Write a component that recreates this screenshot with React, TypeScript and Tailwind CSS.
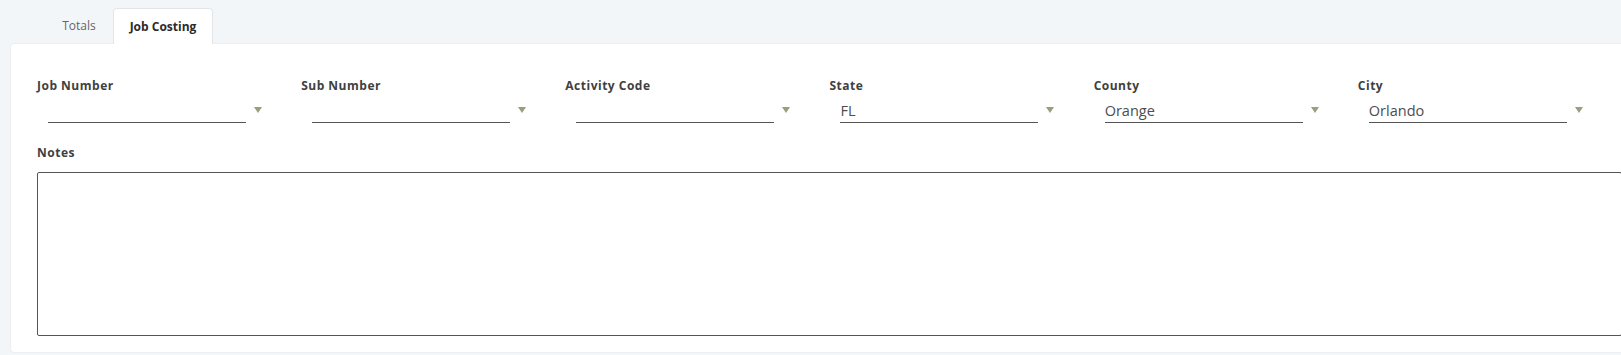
import React from 'react'

type Field = { label: string; value: string }

const fields: Field[] = [
  { label: 'Job Number', value: '' },
  { label: 'Sub Number', value: '' },
  { label: 'Activity Code', value: '' },
  { label: 'State', value: 'FL' },
  { label: 'County', value: 'Orange' },
  { label: 'City', value: 'Orlando' },
]

function SelectField({ label, value }: Field) {
  return (
    <div className="flex flex-col">
      <label className="h-[16px] text-[12px] font-bold leading-[16px] tracking-[0.5px] text-[#404040]">
        {label}
      </label>
      <div className="mt-[6px] flex items-center">
        <div className="ml-[11px] h-[23px] w-[198px] border-b border-[#555] text-[14.5px] leading-[22px] text-[#4d4d4d]">
          {value}
        </div>
        <span className="ml-[8px] mb-[3px] h-0 w-0 border-x-[4.5px] border-t-[6px] border-x-transparent border-t-[#9c9c80]" />
      </div>
    </div>
  )
}

export default function App() {
  return (
    <div className="min-h-[355px] w-[1680px] bg-[#f3f6f9] pt-[8px] font-['Open_Sans',sans-serif]">
      <div className="flex pl-[45px]">
        <div className="flex h-[35px] w-[68px] items-center justify-center text-[12px] text-[#666]">
          Totals
        </div>
        <div className="relative z-10 -mb-px flex h-[36px] w-[100px] items-center justify-center rounded-t-[4px] border border-b-0 border-[#e3e6e9] bg-white text-[12px] font-bold text-[#2b2b2b]">
          Job Costing
        </div>
      </div>
      <div className="ml-[10px] w-[1640px] rounded-[4px] border border-[#eceef0] bg-white pl-[26px] pr-[27px] pt-[34px] pb-[16px]">
        <div className="grid grid-cols-6">
          {fields.map((f) => (
            <SelectField key={f.label} {...f} />
          ))}
        </div>
        <div className="mt-[22px] h-[16px] text-[12px] font-bold leading-[16px] tracking-[0.5px] text-[#404040]">
          Notes
        </div>
        <textarea className="mt-[11px] block h-[164px] w-full resize-none rounded-[2px] border border-[#555] bg-white outline-none" />
      </div>
    </div>
  )
}
